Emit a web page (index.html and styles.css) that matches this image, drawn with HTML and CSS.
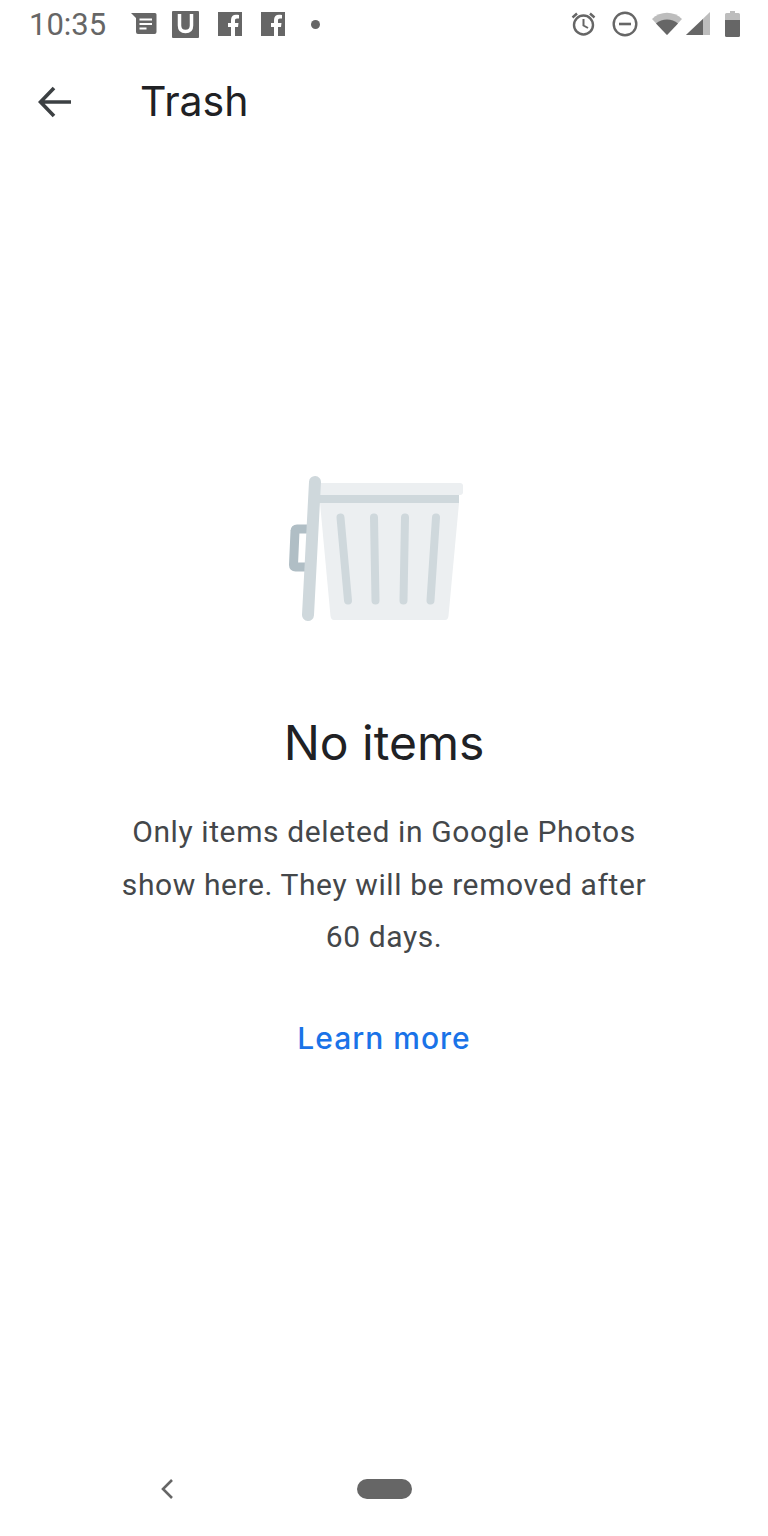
FILE: index.html
```html
<!DOCTYPE html>
<html>
<head>
<meta charset="utf-8">
<title>Trash</title>
<link rel="stylesheet" href="styles.css">
</head>
<body>
<div class="page">
	<div class="status-bar">
		<span class="clock">10:35</span>
		<div class="notify-icons">
			<svg width="26" height="24" viewBox="0 0 26 24"><path d="M0 1H24a1.500 1.500 0 0 1 1.500 1.500V20a2 2 0 0 1-2 2H7a2 2 0 0 1-2-2V6Z" fill="#666"/><path d="M8.500 7.500H21M8.500 12H21M8.500 16.500H15.500" stroke="#fff" stroke-width="2.200"/></svg>
			<svg width="27" height="27" viewBox="0 0 27 27"><rect width="27" height="27" rx="1" fill="#666"/><path d="M7.500 3V14.500C7.500 19 10 20.500 13.500 20.500S19.500 19 19.500 14.500V3" fill="none" stroke="#fff" stroke-width="3.500"/></svg>
			<svg width="24" height="24" viewBox="0 0 24 24"><path d="M0 0H24V24H17V15H20L20.500 11H17V8.500C17 7.300 17.500 6.500 19 6.500H21V3C20 2.800 19 2.800 18 2.800C15 2.800 13 4.700 13 8V11H10V15H13V24H0Z" fill="#666"/></svg>
			<svg width="24" height="24" viewBox="0 0 24 24"><path d="M0 0H24V24H17V15H20L20.500 11H17V8.500C17 7.300 17.500 6.500 19 6.500H21V3C20 2.800 19 2.800 18 2.800C15 2.800 13 4.700 13 8V11H10V15H13V24H0Z" fill="#666"/></svg>
			<span class="dot"></span>
		</div>
		<div class="system-icons">
			<svg class="ic-alarm" width="25" height="26" viewBox="0 0 25 26" fill="none" stroke="#666"><circle cx="12.500" cy="14" r="9.500" stroke-width="2.400"/><path d="M12.500 8V14.500L17 17" stroke-width="2"/><path d="M1.500 6.500L6 2.500M23.500 6.500L19 2.500" stroke-width="2.400"/></svg>
			<svg class="ic-dnd" width="26" height="26" viewBox="0 0 26 26" fill="none" stroke="#666"><circle cx="13" cy="13" r="11.300" stroke-width="2.400"/><path d="M7 13H19" stroke-width="2.600"/></svg>
			<svg class="ic-wifi" width="30" height="24" viewBox="0 0 30 24"><path d="M0 7C8-1.500 22-1.500 30 7L15 23Z" fill="#bdbdbd"/><path d="M4 11.500C10 6 20 6 26 11.500L15 23Z" fill="#666"/></svg>
			<svg class="ic-signal" width="24" height="24" viewBox="0 0 24 24"><path d="M0 23L24 0V23Z" fill="#bdbdbd"/><path d="M0 23L17 7V23Z" fill="#666"/></svg>
			<svg class="ic-batt" width="15" height="26" viewBox="0 0 15 26"><path d="M5 0H10V2H13.500A1.500 1.500 0 0 1 15 3.500V9H0V3.500A1.500 1.500 0 0 1 1.500 2H5Z" fill="#bdbdbd"/><path d="M0 9H15V24.500A1.500 1.500 0 0 1 13.500 26H1.500A1.500 1.500 0 0 1 0 24.500Z" fill="#666"/></svg>
		</div>
	</div>

	<div class="toolbar">
		<svg class="back" width="34" height="32" viewBox="0 0 34 32" fill="none" stroke="#3c4043" stroke-width="3.600"><path d="M33 16H3M16 2L2.500 16L16 30"/></svg>
		<h1 class="title">Trash</h1>
	</div>

	<div class="empty">
		<svg class="can" width="210" height="175" viewBox="0 0 210 175">
			<path d="M37 69H27Q25 69 25 71L23.500 105Q23.500 107 25.500 107H37" fill="none" stroke="#b0bec5" stroke-width="9"/>
			<path d="M50 43H189L178.500 156Q178 160 175 160H64Q61 160 60.500 156Z" fill="#eceff1"/>
			<path d="M50 23H190Q193 23 193 26V32Q193 35 190 35H50Z" fill="#eceff1"/>
			<rect x="48" y="35" width="141" height="8" fill="#cfd8dc"/>
			<path d="M45 22L38 155" stroke="#cfd8dc" stroke-width="12" stroke-linecap="round"/>
			<path d="M70.500 57.500L78 140.500M104 57.500L105.500 140.500M135 57.500L133.500 140.500M166 57.500L160.500 140.500" stroke="#cfd8dc" stroke-width="8" stroke-linecap="round"/>
		</svg>
		<h2 class="empty-title">No items</h2>
		<p class="empty-text">Only items deleted in Google Photos<br>show here. They will be removed after<br>60 days.</p>
		<a class="learn-more">Learn more</a>
	</div>

	<div class="nav-bar">
		<svg class="nav-back" width="14" height="22" viewBox="0 0 14 22" fill="none" stroke="#666" stroke-width="2.600"><path d="M12 2L3 11L12 20"/></svg>
		<span class="nav-home"></span>
	</div>
</div>
</body>
</html>
```
FILE: styles.css
```css
html, body {
	margin: 0;
	background: #fff;
}
.page {
	display: flex;
	flex-direction: column;
	width: 768px;
	height: 1536px;
	font-family: Roboto, "Liberation Sans", sans-serif;
	overflow: hidden;
}

/* status bar */
.status-bar {
	display: flex;
	align-items: center;
	height: 48px;
	padding: 0 28px 0 29px;
	color: #666;
}
.clock {
	font-size: 31px;
	width: 102px;
}
.notify-icons {
	display: flex;
	align-items: center;
	gap: 19px;
}
.notify-icons svg:first-child {
	margin-right: -4px;
}
.dot {
	width: 9px;
	height: 9px;
	margin-left: 7px;
	border-radius: 50%;
	background: #666;
}
.system-icons {
	display: flex;
	align-items: center;
	margin-left: auto;
}
.ic-dnd {
	margin-left: 16px;
}
.ic-wifi {
	margin-left: 14px;
}
.ic-signal {
	margin-left: 4px;
}
.ic-batt {
	margin-left: 15px;
}

/* top bar */
.toolbar {
	display: flex;
	align-items: center;
	height: 108px;
	padding-left: 38px;
}
.title {
	margin: -3px 0 0 68px;
	font-family: Inter, sans-serif;
	font-size: 41px;
	font-weight: 400;
	color: #202124;
}

/* empty state */
.empty {
	display: flex;
	flex-direction: column;
	align-items: center;
	flex: 1;
	padding-top: 304px;
}
.can {
	margin-left: -18px;
}
.empty-title {
	margin: 76px 0 0;
	font-family: Inter, sans-serif;
	font-size: 48px;
	font-weight: 400;
	line-height: 64px;
	color: #202124;
}
.empty-text {
	margin: 31px 0 0;
	font-size: 30px;
	line-height: 52.500px;
	letter-spacing: 0.6px;
	text-align: center;
	color: #44474a;
}
.learn-more {
	margin-top: 50px;
	font-family: Inter, sans-serif;
	font-size: 30px;
	font-weight: 500;
	line-height: 48px;
	letter-spacing: 1px;
	color: #1a73e8;
}

/* nav bar */
.nav-bar {
	display: flex;
	align-items: center;
	height: 94px;
	padding-left: 160px;
}
.nav-home {
	width: 55px;
	height: 20px;
	margin-left: 183px;
	border-radius: 10px;
	background: #666;
}
```
